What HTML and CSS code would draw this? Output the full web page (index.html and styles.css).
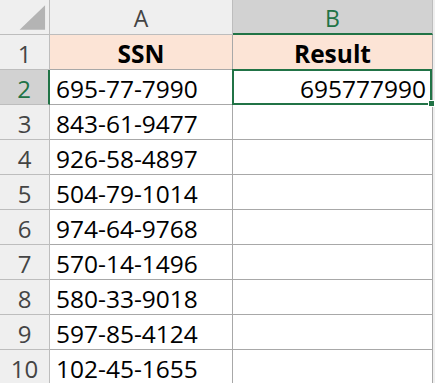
FILE: index.html
```html
<!DOCTYPE html>
<html lang="en">
<head>
  <meta charset="UTF-8" />
  <title>SSN sheet</title>
  <link rel="stylesheet" href="styles.css">
</head>
<body>
  <div class="sheet">
    <div class="hd corner">
      <svg width="50" height="34" viewBox="0 0 50 34"><polygon points="20,30 46,30 46,5" fill="#b4b4b4"/></svg>
    </div>
    <div class="hd col">A</div>
    <div class="hd col sel-col">B</div>
    <div class="hd rest"></div>

    <div class="hd row">1</div>
    <div class="cell title">SSN</div>
    <div class="cell title">Result</div>
    <div class="hd rest"></div>

    <div class="hd row sel-row">2</div>
    <div class="cell">695-77-7990</div>
    <div class="cell num active">695777990</div>
    <div class="hd rest"></div>

    <div class="hd row">3</div>
    <div class="cell">843-61-9477</div>
    <div class="cell"></div>
    <div class="hd rest"></div>

    <div class="hd row">4</div>
    <div class="cell">926-58-4897</div>
    <div class="cell"></div>
    <div class="hd rest"></div>

    <div class="hd row">5</div>
    <div class="cell">504-79-1014</div>
    <div class="cell"></div>
    <div class="hd rest"></div>

    <div class="hd row">6</div>
    <div class="cell">974-64-9768</div>
    <div class="cell"></div>
    <div class="hd rest"></div>

    <div class="hd row">7</div>
    <div class="cell">570-14-1496</div>
    <div class="cell"></div>
    <div class="hd rest"></div>

    <div class="hd row">8</div>
    <div class="cell">580-33-9018</div>
    <div class="cell"></div>
    <div class="hd rest"></div>

    <div class="hd row">9</div>
    <div class="cell">597-85-4124</div>
    <div class="cell"></div>
    <div class="hd rest"></div>

    <div class="hd row">10</div>
    <div class="cell">102-45-1655</div>
    <div class="cell"></div>
    <div class="hd rest"></div>
  </div>
</body>
</html>
```

FILE: styles.css
```css
body {
  margin: 0;
  background: #efefef;
  font-family: "Open Sans", "Liberation Sans", sans-serif;
  overflow: hidden;
}

.sheet {
  display: grid;
  grid-template-columns: 50px 183px 200px 1fr;
  grid-auto-rows: 35px;
}

.hd {
  background: #efefef;
  color: #444;
  font-size: 23px;
  display: flex;
  align-items: center;
  justify-content: center;
  border-right: 1px solid #bdbdbd;
  border-bottom: 1px solid #bdbdbd;
}

.corner {
  align-items: flex-start;
  justify-content: flex-start;
}

.corner svg {
  display: block;
}

.col {
  padding-top: 2px;
}

.sel-col {
  background: #d2d2d2;
  color: #217346;
  border-bottom: 2px solid #217346;
}

.row {
  font-size: 24px;
  padding-top: 2px;
}

.sel-row {
  background: #d2d2d2;
  color: #217346;
  border-right: 2px solid #217346;
}

.rest {
  border-right: none;
  border-bottom: none;
}

.cell {
  background: #fff;
  color: #000;
  font-size: 24.5px;
  display: flex;
  align-items: center;
  padding: 2px 6px 0;
  border-right: 1px solid #a8a8a8;
  border-bottom: 1px solid #a8a8a8;
  white-space: nowrap;
}

.title {
  background: #fce4d6;
  font-weight: bold;
  justify-content: center;
}

.num {
  justify-content: flex-end;
}

.active {
  position: relative;
}

.active::after {
  content: "";
  position: absolute;
  left: -1px;
  top: -1px;
  width: 200px;
  height: 36px;
  box-sizing: border-box;
  border: 2px solid #217346;
}

.active::before {
  content: "";
  position: absolute;
  right: -3px;
  bottom: -3px;
  width: 5px;
  height: 5px;
  background: #217346;
  border: 1px solid #fff;
  z-index: 1;
}
```
